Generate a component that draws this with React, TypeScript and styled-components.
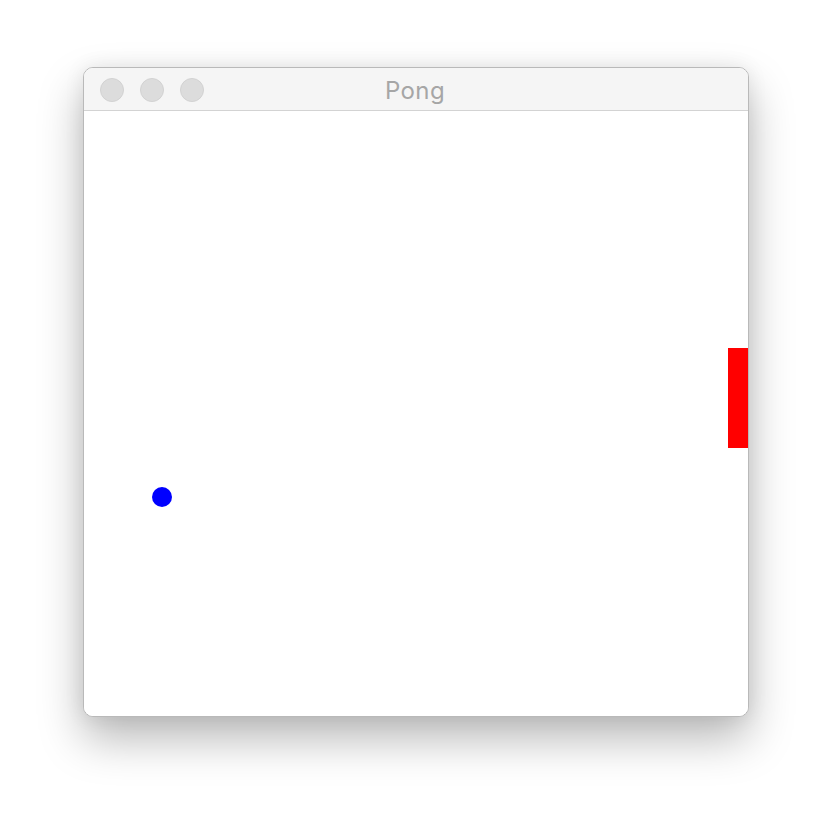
import React from "react";
import styled, { createGlobalStyle } from "styled-components";

const GlobalStyle = createGlobalStyle`
  html, body {
    margin: 0;
    padding: 0;
    background: #ffffff;
  }
  body {
    width: 832px;
    height: 816px;
    overflow: hidden;
    font-family: Inter, "Liberation Sans", sans-serif;
  }
`;

const Page = styled.div`
  width: 832px;
  height: 816px;
  display: flex;
  justify-content: center;
  align-items: flex-start;
  padding-top: 67px;
  box-sizing: border-box;
`;

const Window = styled.div`
  width: 666px;
  height: 650px;
  box-sizing: border-box;
  border: 1px solid #b9b9b9;
  border-radius: 10px;
  overflow: hidden;
  background: #ffffff;
  display: flex;
  flex-direction: column;
  box-shadow: 0 22px 45px rgba(0, 0, 0, 0.28), 0 0 20px rgba(0, 0, 0, 0.08);
`;

const TitleBar = styled.div`
  position: relative;
  height: 43px;
  flex: none;
  box-sizing: border-box;
  background: #f5f5f5;
  border-bottom: 1px solid #d3d3d3;
  display: flex;
  align-items: center;
  justify-content: center;
`;

const Lights = styled.div`
  position: absolute;
  left: 16px;
  top: 10px;
  display: flex;
  gap: 16px;
`;

const Light = styled.span`
  width: 24px;
  height: 24px;
  box-sizing: border-box;
  border-radius: 50%;
  background: #dcdcdc;
  border: 1px solid #d2d2d2;
`;

const Title = styled.div`
  font-size: 24px;
  color: #a6a6a6;
  letter-spacing: 0.4px;
  margin-top: 2px;
  margin-left: -2px;
`;

const Court = styled.div`
  position: relative;
  flex: 1;
  background: #ffffff;
`;

const Ball = styled.div`
  position: absolute;
  width: 20px;
  height: 20px;
  border-radius: 50%;
  background: #0000ff;
`;

const Paddle = styled.div`
  position: absolute;
  width: 20px;
  height: 100px;
  background: #ff0000;
`;

const App: React.FC = () => {
  const ball = { x: 68, y: 376 };
  const paddle = { y: 237 };

  return (
    <>
      <GlobalStyle />
      <Page>
        <Window>
          <TitleBar>
            <Lights>
              <Light />
              <Light />
              <Light />
            </Lights>
            <Title>Pong</Title>
          </TitleBar>
          <Court>
            <Ball style={{ left: ball.x, top: ball.y }} />
            <Paddle style={{ right: 0, top: paddle.y }} />
          </Court>
        </Window>
      </Page>
    </>
  );
};

export default App;
